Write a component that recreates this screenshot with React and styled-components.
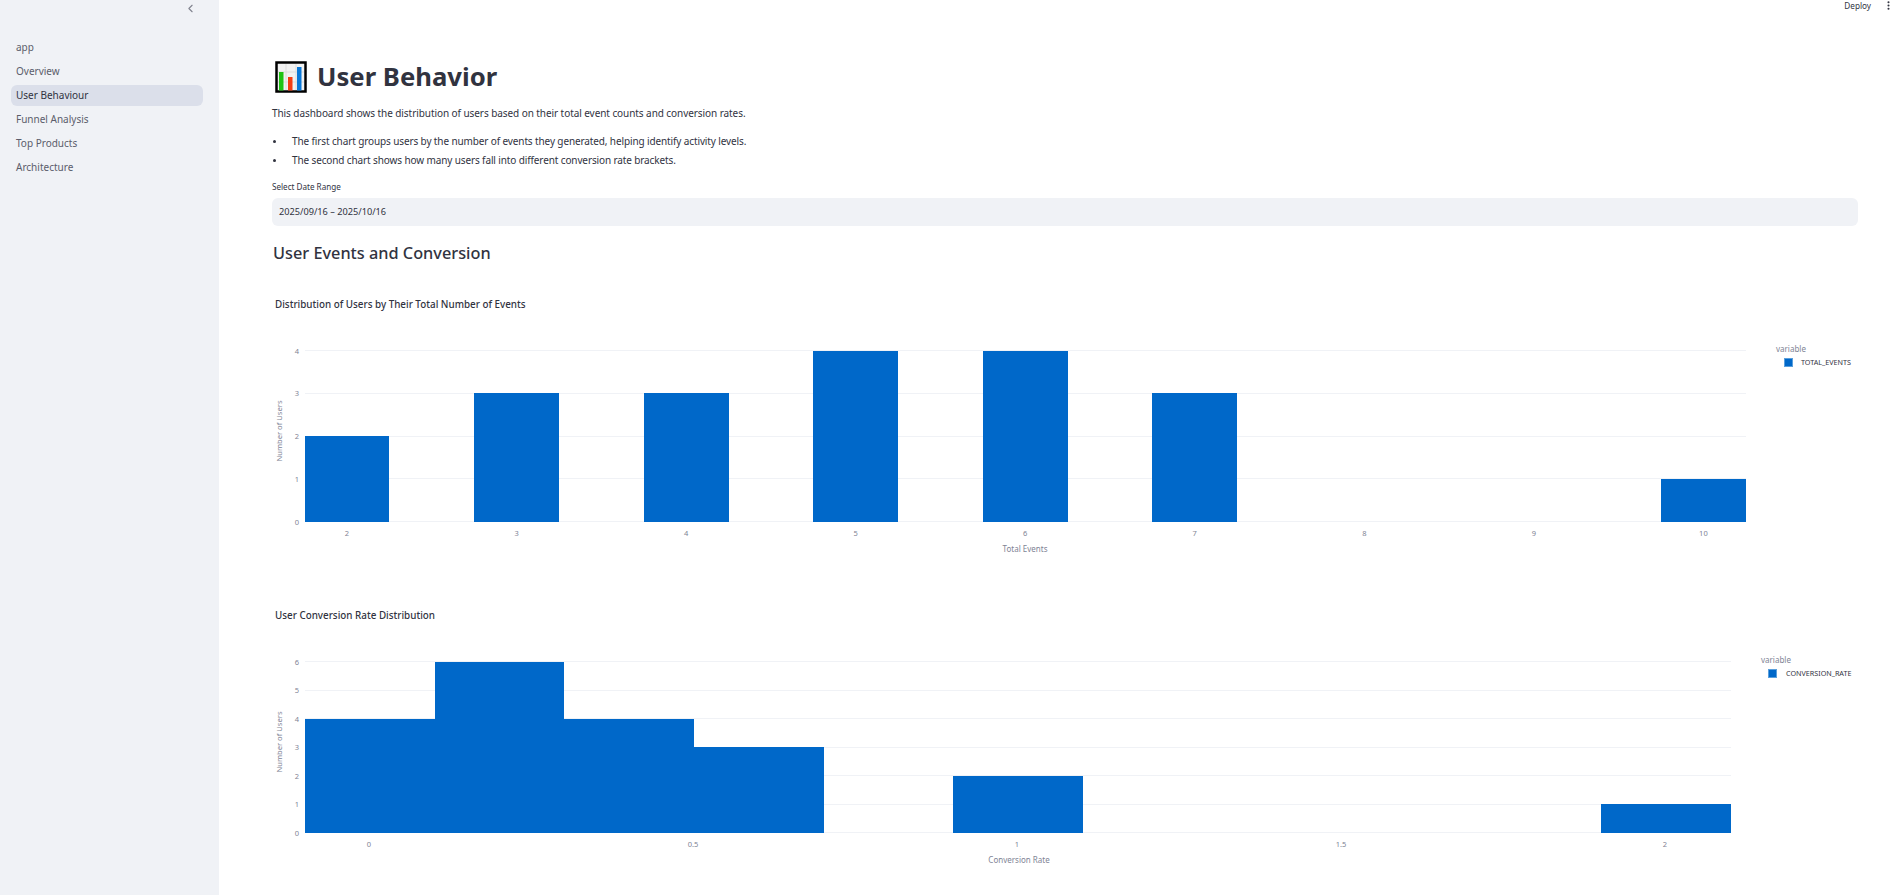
import React from "react";
import styled, { createGlobalStyle } from "styled-components";
import { ChevronLeft, MoreVertical } from "lucide-react";

const NAV_ITEMS = ["app", "Overview", "User Behaviour", "Funnel Analysis", "Top Products", "Architecture"];

const PLOT_LEFT = 33;
const PLOT_TOP = 70.5;
const PLOT_HEIGHT = 171;

const eventsChart = {
  title: "Distribution of Users by Their Total Number of Events",
  xTitle: "Total Events",
  xTitleAt: 753,
  plotWidth: 1441,
  maxY: 4,
  legendName: "TOTAL_EVENTS",
  legendX: 1504,
  swatchX: 1512,
  labelX: 1529,
  xTicks: [2, 3, 4, 5, 6, 7, 8, 9, 10].map((label, i) => ({ label, x: 75 + i * 169.55 })),
  bars: [
    [0, 2],
    [1, 3],
    [2, 3],
    [3, 4],
    [4, 4],
    [5, 3],
    [8, 1],
  ].map(([i, value]) => ({ x: PLOT_LEFT + i * 169.55 - 0.4, width: 84.8, value })),
};

const conversionChart = {
  title: "User Conversion Rate Distribution",
  xTitle: "Conversion Rate",
  xTitleAt: 747,
  plotWidth: 1426,
  maxY: 6,
  legendName: "CONVERSION_RATE",
  legendX: 1489,
  swatchX: 1496,
  labelX: 1514,
  xTicks: ["0", "0.5", "1", "1.5", "2"].map((label, i) => ({ label, x: 97 + i * 324 })),
  bars: [
    [0, 4],
    [1, 6],
    [2, 4],
    [3, 3],
    [5, 2],
    [10, 1],
  ].map(([i, value]) => ({ x: PLOT_LEFT + i * 129.64, width: 129.64, value })),
};

const BarChart = ({ chart }) => {
  const unit = PLOT_HEIGHT / chart.maxY;
  const ticks = Array.from({ length: chart.maxY + 1 }, (_, i) => i);
  const base = PLOT_TOP + PLOT_HEIGHT;

  return (
    <ChartSvg viewBox="0 0 1586 311">
      <ChartTitle x="3" y="28">{chart.title}</ChartTitle>
      {ticks.map((t) => (
        <g key={t}>
          <GridLine x1={PLOT_LEFT} x2={PLOT_LEFT + chart.plotWidth} y1={base - t * unit} y2={base - t * unit} />
          <TickText x="27" y={base - t * unit + 3} textAnchor="end">{t}</TickText>
        </g>
      ))}
      {chart.bars.map((bar) => (
        <Bar key={bar.x} x={bar.x} width={bar.width} y={base - bar.value * unit} height={bar.value * unit} />
      ))}
      {chart.xTicks.map((tick) => (
        <TickText key={tick.label} x={tick.x} y="256" textAnchor="middle">{tick.label}</TickText>
      ))}
      <AxisTitle x={chart.xTitleAt} y="272" textAnchor="middle">{chart.xTitle}</AxisTitle>
      <YAxisTitle x="0" y="0" textAnchor="middle" transform="translate(10 151) rotate(-90)">Number of Users</YAxisTitle>
      <AxisTitle x={chart.legendX} y="72">variable</AxisTitle>
      <Swatch x={chart.swatchX + 0.5} y="78.5" width="8" height="8" />
      <LegendLabel x={chart.labelX} y="85">{chart.legendName}</LegendLabel>
    </ChartSvg>
  );
};

const BarChartEmoji = () => (
  <svg width="32" height="32" viewBox="0 0 32 32">
    <rect x="1.5" y="1.5" width="29" height="29" fill="#f2f2f2" stroke="#000" strokeWidth="2.5" />
    <path d="M3 11H29M3 21H29M11 3V29M21 3V29" stroke="#dcdcdc" strokeWidth="1" />
    <rect x="4" y="11" width="4.5" height="18.5" fill="#1fc314" />
    <rect x="13" y="16" width="4.5" height="13.5" fill="#f53d12" />
    <rect x="22" y="6" width="4.5" height="23.5" fill="#0a78d8" />
  </svg>
);

const App = () => {
  return (
    <Container>
      <GlobalStyle />
      <Sidebar>
        <CollapseRow>
          <ChevronLeft size={13} color="#81838f" strokeWidth={2} />
        </CollapseRow>
        <Nav>
          {NAV_ITEMS.map((item) => (
            <NavItem key={item} $active={item === "User Behaviour"}>{item}</NavItem>
          ))}
        </Nav>
      </Sidebar>
      <Main>
        <TopBar>
          <DeployLabel>Deploy</DeployLabel>
          <MoreVertical size={11} color="#31333f" strokeWidth={2.5} />
        </TopBar>
        <Content>
          <PageTitle>
            <BarChartEmoji />
            User Behavior
          </PageTitle>
          <Intro>This dashboard shows the distribution of users based on their total event counts and conversion rates.</Intro>
          <List>
            <li>The first chart groups users by the number of events they generated, helping identify activity levels.</li>
            <li>The second chart shows how many users fall into different conversion rate brackets.</li>
          </List>
          <FieldLabel>Select Date Range</FieldLabel>
          <DateField>2025/09/16 – 2025/10/16</DateField>
          <SectionTitle>User Events and Conversion</SectionTitle>
          <Charts>
            <BarChart chart={eventsChart} />
            <BarChart chart={conversionChart} />
          </Charts>
        </Content>
      </Main>
    </Container>
  );
};

const GlobalStyle = createGlobalStyle`
  html, body {
    margin: 0;
    height: 100%;
    overflow: hidden;
    background: #fff;
  }
  * {
    box-sizing: border-box;
  }
`;

const Container = styled.div`
  display: flex;
  height: 100vh;
  overflow: hidden;
  color: #31333f;
  font-family: "Noto Sans", sans-serif;
`;

const Sidebar = styled.aside`
  flex: 0 0 219px;
  background: #f0f2f6;
`;

const CollapseRow = styled.div`
  display: flex;
  justify-content: flex-end;
  height: 37px;
  padding: 2px 22px 0 0;
`;

const Nav = styled.nav`
  display: flex;
  flex-direction: column;
  gap: 3px;
  padding: 0 16px 0 11px;
`;

const NavItem = styled.div`
  height: 21px;
  padding-left: 5px;
  border-radius: 6px;
  font-size: 10px;
  line-height: 21px;
  color: ${(p) => (p.$active ? "#31333f" : "#5b5d6b")};
  background: ${(p) => (p.$active ? "#dbdfea" : "transparent")};
`;

const Main = styled.main`
  flex: 1;
  min-width: 0;
`;

const TopBar = styled.header`
  display: flex;
  justify-content: flex-end;
  align-items: center;
  gap: 12px;
  height: 11px;
  padding-right: 2px;
`;

const DeployLabel = styled.span`
  font-size: 8.2px;
  line-height: 11px;
`;

const Content = styled.div`
  padding: 47px 38px 0 53px;
`;

const PageTitle = styled.h1`
  display: flex;
  align-items: center;
  gap: 10px;
  height: 38px;
  margin: 0 0 0 3px;
  font-size: 25.7px;
  font-weight: 700;
  line-height: 38px;
`;

const Intro = styled.p`
  margin: 8px 0 0;
  font-size: 10px;
  letter-spacing: -0.07px;
  line-height: 19px;
`;

const List = styled.ul`
  margin: 9px 0 0;
  padding: 0;
  list-style: none;
  font-size: 10px;
  letter-spacing: -0.12px;
  line-height: 19px;

  li {
    display: flex;
    align-items: center;
  }

  li::before {
    content: "";
    flex: 0 0 3px;
    height: 3px;
    margin: 0 16px 0 1px;
    border-radius: 50%;
    background: #31333f;
  }
`;

const FieldLabel = styled.div`
  margin-top: 11px;
  font-size: 8.1px;
  line-height: 12px;
`;

const DateField = styled.div`
  height: 28px;
  margin-top: 5px;
  padding-left: 7px;
  border-radius: 6px;
  background: #f0f2f6;
  font-size: 9.2px;
  line-height: 28px;
`;

const SectionTitle = styled.h3`
  margin: 16px 0 0 1px;
  font-size: 16.3px;
  font-weight: 500;
  line-height: 23px;
`;

const Charts = styled.div`
  display: flex;
  flex-direction: column;
  margin-top: 15px;
`;

const ChartSvg = styled.svg`
  display: block;
  flex: 0 0 311px;
  width: 1586px;
  height: 311px;
`;

const ChartTitle = styled.text`
  font-family: "Noto Sans", sans-serif;
  font-size: 9.85px;
  font-weight: 500;
  fill: #31333f;
`;

const GridLine = styled.line`
  stroke: #f0f2f6;
  stroke-width: 1;
  shape-rendering: crispEdges;
`;

const Bar = styled.rect`
  fill: #0068c9;
  shape-rendering: crispEdges;
`;

const TickText = styled.text`
  font-family: "Noto Sans", sans-serif;
  font-size: 7.5px;
  fill: #808495;
`;

const AxisTitle = styled.text`
  font-family: "Noto Sans", sans-serif;
  font-size: 8px;
  fill: #808495;
`;

const YAxisTitle = styled(AxisTitle)`
  font-size: 7.6px;
`;

const Swatch = styled.rect`
  fill: #0068c9;
  stroke: #5a9fdc;
  stroke-width: 1;
  shape-rendering: crispEdges;
`;

const LegendLabel = styled.text`
  font-family: "Noto Sans", sans-serif;
  font-size: 7.2px;
  fill: #31333f;
`;

export default App;
